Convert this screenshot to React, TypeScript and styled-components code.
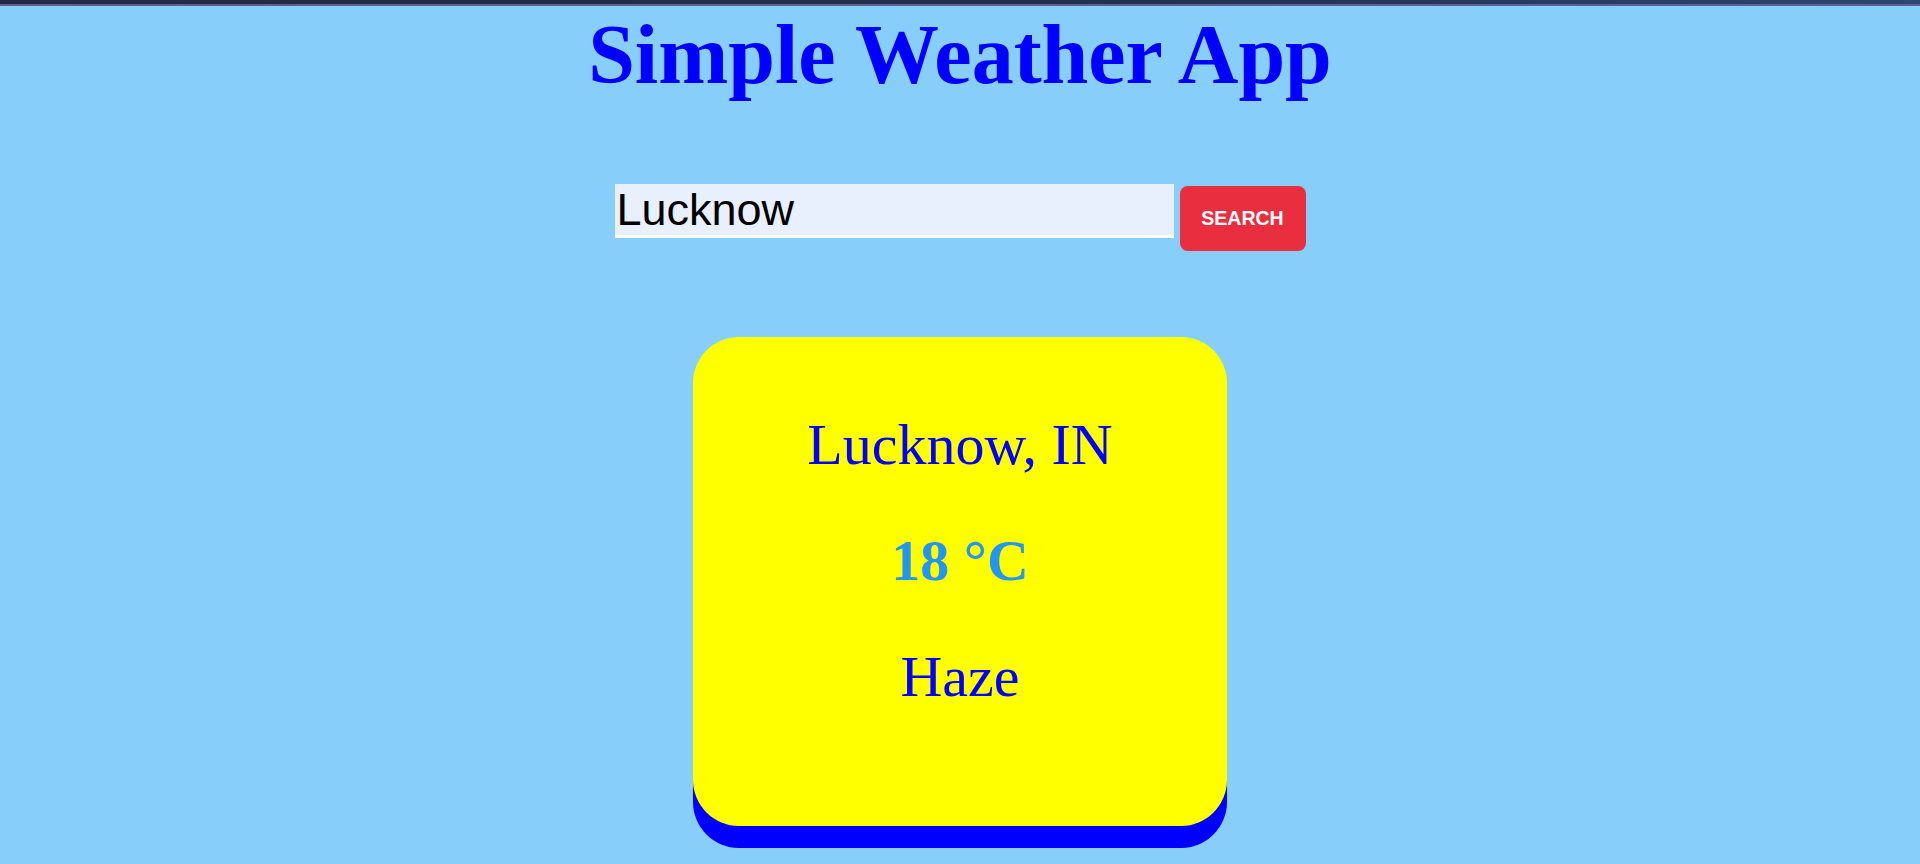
import React, { FC, useState } from 'react';
import styled, { createGlobalStyle } from 'styled-components';

const GlobalStyle = createGlobalStyle`
  html, body {
    margin: 0;
    padding: 0;
    background: #87cefa;
  }

  body {
    min-height: 864px;
    overflow: hidden;
    font-family: "Liberation Serif", "Times New Roman", serif;
  }
`;

const TopStrip = styled.div`
  height: 4px;
  background: linear-gradient(90deg, #232a42 0%, #25304d 60%, #2f4572 100%);
  border-bottom: 2px solid #5b6193;
`;

const Page = styled.div`
  display: flex;
  flex-direction: column;
  align-items: center;
`;

const Title = styled.h1`
  margin: 1px 0 0;
  font-family: "Liberation Serif", "Times New Roman", serif;
  font-size: 84px;
  line-height: 95px;
  font-weight: 700;
  color: #0000ff;
`;

const SearchRow = styled.form`
  display: flex;
  align-items: flex-start;
  gap: 6px;
  margin-top: 82px;
`;

const SearchInput = styled.input`
  box-sizing: content-box;
  width: 555px;
  height: 51px;
  padding: 0 2px;
  border: none;
  border-bottom: 3px solid #ffffff;
  background: #e8f0fe;
  font-family: "Liberation Sans", Arial, sans-serif;
  font-size: 45px;
  line-height: 51px;
  color: #000000;
  outline: none;
`;

const SearchButton = styled.button`
  margin-top: 2px;
  width: 126px;
  height: 65px;
  padding: 0;
  border: none;
  border-radius: 8px;
  background: #e92e3f;
  color: #ffffff;
  font-family: "Liberation Sans", Arial, sans-serif;
  font-size: 19.5px;
  font-weight: 700;
  text-transform: uppercase;
  cursor: pointer;
`;

const Card = styled.div`
  box-sizing: border-box;
  width: 534px;
  margin-top: 86px;
  padding: 76px 0 117px;
  display: flex;
  flex-direction: column;
  align-items: center;
  gap: 52px;
  background: #ffff00;
  border-radius: 46px;
  box-shadow: 0 22px 0 #0000ff;
`;

const CardLine = styled.div<{ $bold?: boolean; $accent?: boolean }>`
  font-family: "Liberation Serif", "Times New Roman", serif;
  font-size: 58px;
  line-height: 64px;
  font-weight: ${({ $bold }) => ($bold ? 700 : 400)};
  color: ${({ $accent }) => ($accent ? '#2196f3' : '#0000ff')};
`;

interface Weather {
  city: string;
  country: string;
  temp: number;
  description: string;
}

const WeatherCard: FC<{ weather: Weather }> = ({ weather }) => (
  <Card>
    <CardLine>
      {weather.city}, {weather.country}
    </CardLine>
    <CardLine $bold $accent>
      {weather.temp} °C
    </CardLine>
    <CardLine>{weather.description}</CardLine>
  </Card>
);

const App: FC = () => {
  const [query, setQuery] = useState('Lucknow');
  const weather: Weather = {
    city: 'Lucknow',
    country: 'IN',
    temp: 18,
    description: 'Haze',
  };

  return (
    <>
      <GlobalStyle />
      <TopStrip />
      <Page>
        <Title>Simple Weather App</Title>
        <SearchRow onSubmit={(e) => e.preventDefault()}>
          <SearchInput value={query} onChange={(e) => setQuery(e.target.value)} />
          <SearchButton type="submit">Search</SearchButton>
        </SearchRow>
        <WeatherCard weather={weather} />
      </Page>
    </>
  );
};

export default App;
